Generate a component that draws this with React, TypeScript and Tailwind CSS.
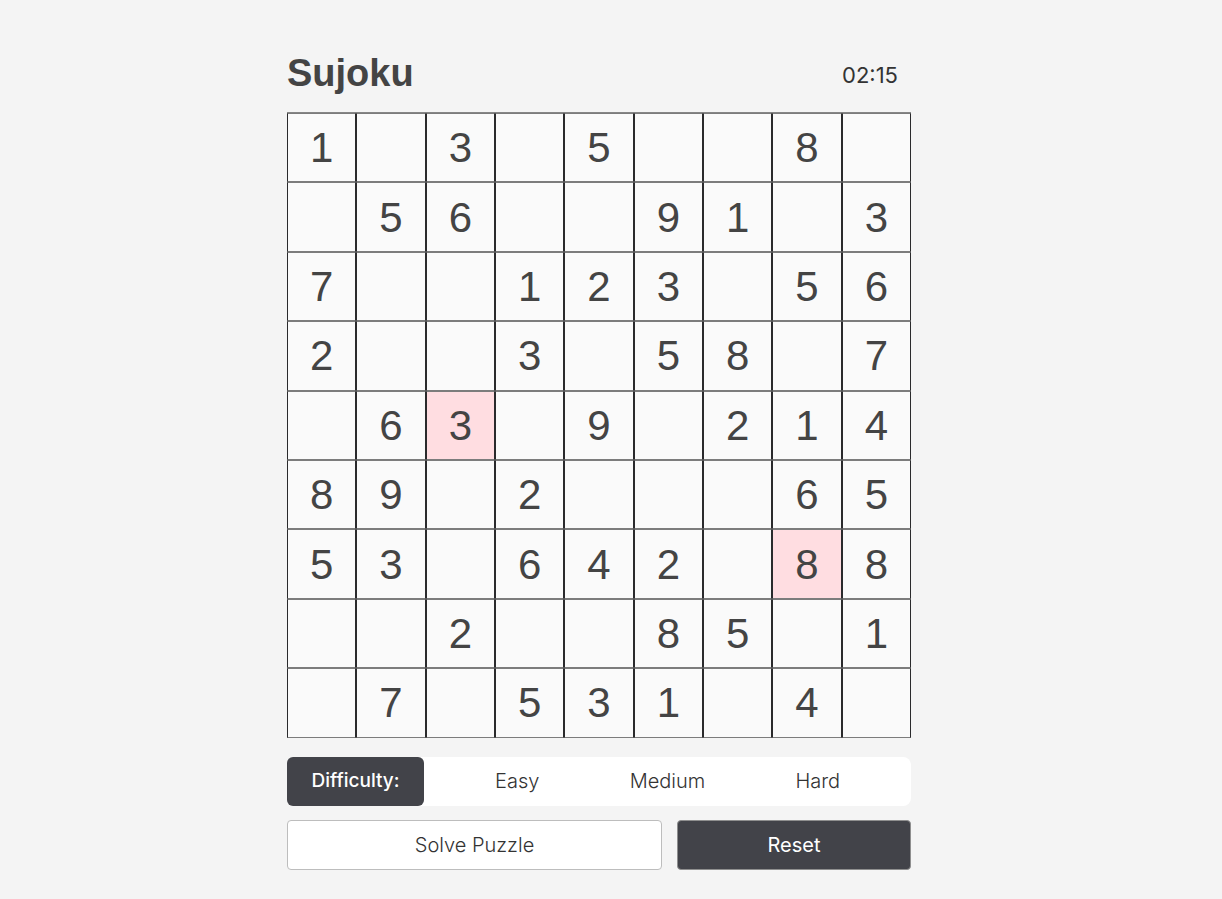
import { useState } from "react"

const puzzle: (number | null)[][] = [
    [1, null, 3, null, 5, null, null, 8, null],
    [null, 5, 6, null, null, 9, 1, null, 3],
    [7, null, null, 1, 2, 3, null, 5, 6],
    [2, null, null, 3, null, 5, 8, null, 7],
    [null, 6, 3, null, 9, null, 2, 1, 4],
    [8, 9, null, 2, null, null, null, 6, 5],
    [5, 3, null, 6, 4, 2, null, 8, 8],
    [null, null, 2, null, null, 8, 5, null, 1],
    [null, 7, null, 5, 3, 1, null, 4, null],
]

// cells flagged as conflicting
const conflicts = ["4-2", "6-7"]

export default function App() {
    const [level, setLevel] = useState("Easy")

    return (
        <div className="min-h-[899px] w-full bg-[#f4f4f4] flex justify-center pr-6 font-['Inter','Liberation_Sans',sans-serif] text-[#444]">
            <div className="w-[624px] pt-[48px]">
                <div className="h-[50px] flex items-center justify-between mb-[14px]">
                    <h1 className="text-[38px] font-bold font-['Liberation_Sans',Arial,sans-serif] text-[#444]">Sujoku</h1>
                    <span className="text-[22px] text-[#333] pr-[13px] pt-[4px]">02:15</span>
                </div>

                <div className="grid grid-cols-9 border-t border-t-[#868686]">
                    {puzzle.map((row, r) =>
                        row.map((val, c) => (
                            <div
                                key={r + "-" + c}
                                className={
                                    "h-[69.4px] flex items-center justify-center border border-x-[#2a2a2c] border-y-[#7c7c7c] text-[42px] font-['Liberation_Sans',Arial,sans-serif] text-[#444] " +
                                    (conflicts.includes(r + "-" + c) ? "bg-[#ffdde1]" : "bg-[#fafafa]")
                                }
                            >
                                {val}
                            </div>
                        ))
                    )}
                </div>

                <div className="mt-[19px] h-[49px] flex bg-white rounded-lg">
                    <div className="w-[137px] flex items-center justify-center bg-[#424349] text-white text-[19px] font-medium rounded-md">
                        Difficulty:
                    </div>
                    <div className="flex-1 flex px-[18px]">
                        {["Easy", "Medium", "Hard"].map((l) => (
                            <button
                                key={l}
                                onClick={() => setLevel(l)}
                                className={"flex-1 flex items-center justify-center text-[20px] font-light " + (level === l ? "text-[#333]" : "text-[#333]")}
                            >
                                {l}
                            </button>
                        ))}
                    </div>
                </div>

                <div className="mt-[14px] flex gap-[15px]">
                    <button className="w-[375px] h-[50px] bg-white border border-[#bdbdbd] rounded-[4px] text-[20px] font-light text-[#333]">
                        Solve Puzzle
                    </button>
                    <button className="flex-1 h-[50px] bg-[#424349] border border-[#8f8f8f] rounded-[4px] text-[20px] text-white">
                        Reset
                    </button>
                </div>
            </div>
        </div>
    )
}
